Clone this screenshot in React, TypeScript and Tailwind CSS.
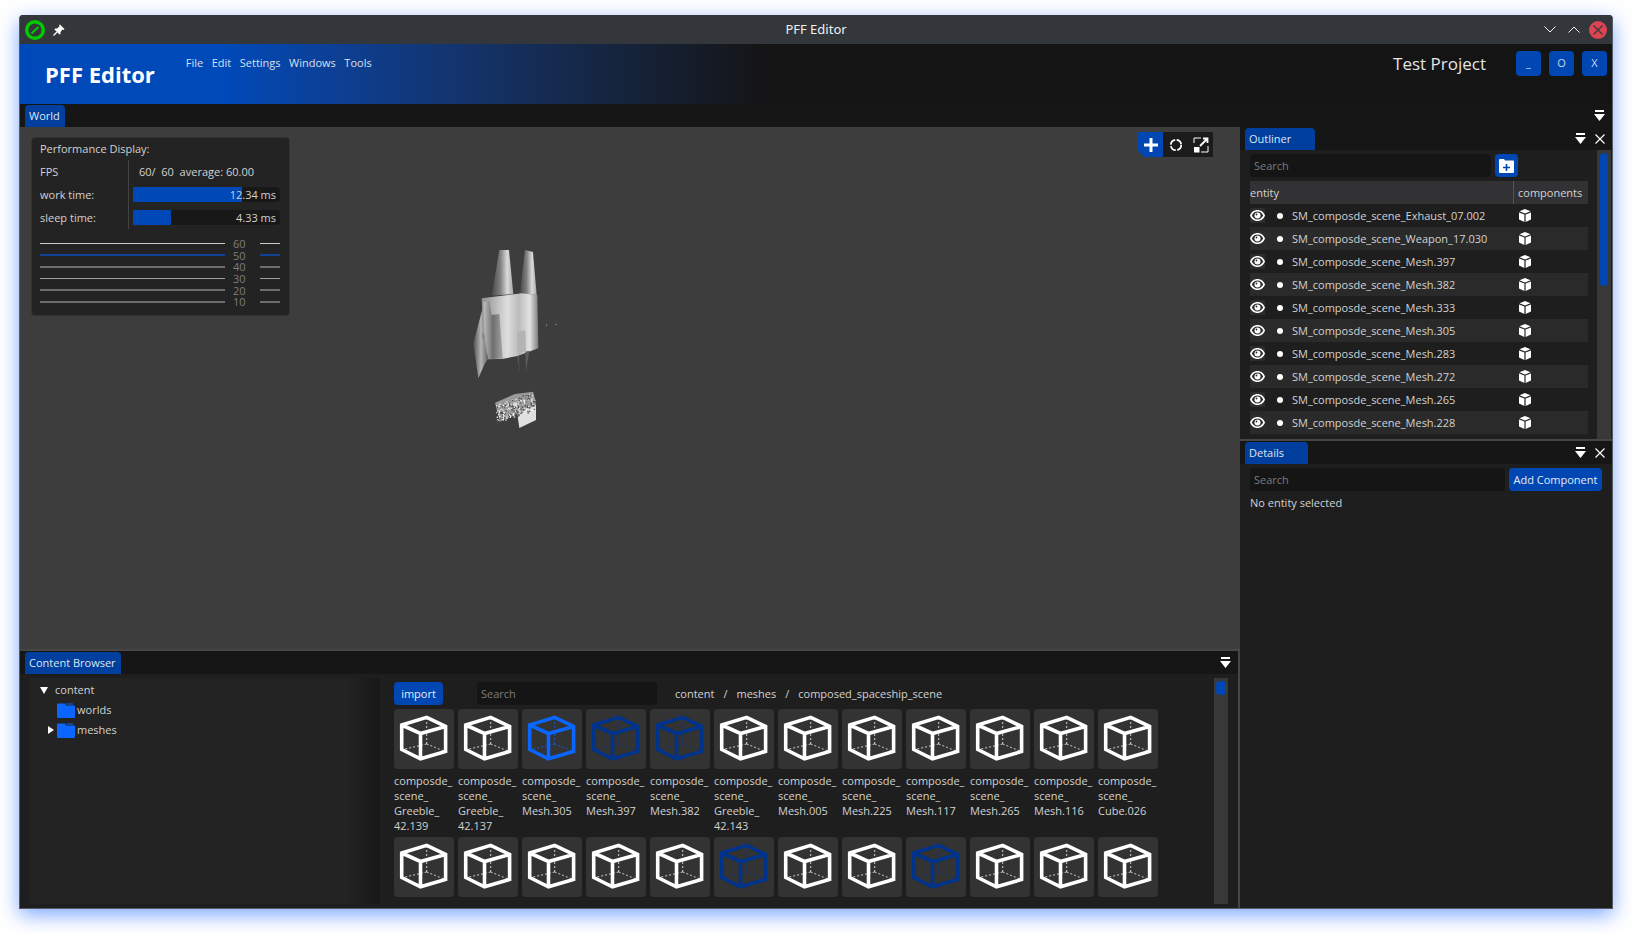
const ENTITIES = [
  "SM_composde_scene_Exhaust_07.002",
  "SM_composde_scene_Weapon_17.030",
  "SM_composde_scene_Mesh.397",
  "SM_composde_scene_Mesh.382",
  "SM_composde_scene_Mesh.333",
  "SM_composde_scene_Mesh.305",
  "SM_composde_scene_Mesh.283",
  "SM_composde_scene_Mesh.272",
  "SM_composde_scene_Mesh.265",
  "SM_composde_scene_Mesh.228",
];

type Tint = "white" | "bright" | "dark";

const TINTS: Record<Tint, string> = {
  white: "text-white",
  bright: "text-[#0a66ff]",
  dark: "text-[#00338c]",
};

const ROW_ONE: { lines: string[]; tint: Tint }[] = [
  { lines: ["composde_", "scene_", "Greeble_", "42.139"], tint: "white" },
  { lines: ["composde_", "scene_", "Greeble_", "42.137"], tint: "white" },
  { lines: ["composde_", "scene_", "Mesh.305"], tint: "bright" },
  { lines: ["composde_", "scene_", "Mesh.397"], tint: "dark" },
  { lines: ["composde_", "scene_", "Mesh.382"], tint: "dark" },
  { lines: ["composde_", "scene_", "Greeble_", "42.143"], tint: "white" },
  { lines: ["composde_", "scene_", "Mesh.005"], tint: "white" },
  { lines: ["composde_", "scene_", "Mesh.225"], tint: "white" },
  { lines: ["composde_", "scene_", "Mesh.117"], tint: "white" },
  { lines: ["composde_", "scene_", "Mesh.265"], tint: "white" },
  { lines: ["composde_", "scene_", "Mesh.116"], tint: "white" },
  { lines: ["composde_", "scene_", "Cube.026"], tint: "white" },
];

const ROW_TWO: Tint[] = ["white", "white", "white", "white", "white", "dark", "white", "white", "dark", "white", "white", "white"];

const GRAPH = [
  { label: "60", line: "bg-[#c8c8c8] h-px" },
  { label: "50", line: "bg-[#0f4296] h-[2px]" },
  { label: "40", line: "bg-[#6e6e6e] h-[2px]" },
  { label: "30", line: "bg-[#a0a0a0] h-px" },
  { label: "20", line: "bg-[#6e6e6e] h-[2px]" },
  { label: "10", line: "bg-[#6e6e6e] h-[2px]" },
];

const PopupIcon = () => (
  <svg width="11" height="12" viewBox="0 0 11 12" className="text-white">
    <rect x="1" y="0" width="9" height="2" fill="currentColor" />
    <path d="M0 4h11L5.5 11z" fill="currentColor" />
  </svg>
);

const CloseIcon = () => (
  <svg width="10" height="10" viewBox="0 0 10 10" className="text-white">
    <path d="M0.5 0.5l9 9M9.5 0.5l-9 9" stroke="currentColor" strokeWidth="1.2" />
  </svg>
);

const EyeIcon = () => (
  <svg width="15" height="11" viewBox="0 0 15 11">
    <path
      fillRule="evenodd"
      d="M7.5 0C11 0 13.8 2.2 15 5.5C13.8 8.8 11 11 7.5 11C4 11 1.2 8.8 0 5.5C1.2 2.2 4 0 7.5 0ZM7.5 1.6C5 1.6 2.9 3.1 1.8 5.5C2.9 7.9 5 9.4 7.5 9.4C10 9.4 12.1 7.9 13.2 5.5C12.1 3.1 10 1.6 7.5 1.6Z"
      fill="white"
    />
    <circle cx="7.5" cy="5.5" r="3" fill="white" />
    <circle cx="6.5" cy="4.5" r="0.9" fill="#2c2c2c" />
  </svg>
);

const CubeIcon = () => (
  <svg width="12" height="13" viewBox="0 0 12 13" className="text-white">
    <path d="M6 0L11.5 2.3L6 4.6L0.5 2.3Z" fill="currentColor" />
    <path d="M0 3.4L5.4 5.6V13L0 10.6Z" fill="currentColor" />
    <path d="M12 3.4L6.6 5.6V13L12 10.6Z" fill="currentColor" />
  </svg>
);

const Tab = ({ label, width }: { label: string; width: string }) => (
  <div className={`mt-px flex h-[22px] items-center rounded-t-sm bg-[#003f9e] pl-1 text-[#dfe6f2] ${width}`}>{label}</div>
);

const SearchBox = ({ width }: { width: string }) => (
  <div className={`flex h-[23px] items-center rounded-sm bg-[#151515] pl-1 pt-px text-[#7b7b7b] ${width}`}>Search</div>
);

const FolderIcon = () => (
  <svg width="18" height="15" viewBox="0 0 18 15" className="shrink-0 text-[#0a66ff]">
    <path d="M0 1.5a1 1 0 0 1 1-1h7l1 2h8a1 1 0 0 1 1 1V14a1 1 0 0 1-1 1H1a1 1 0 0 1-1-1z" fill="currentColor" />
    <path d="M9 0.5h7v1H9.5z" fill="currentColor" />
  </svg>
);

// wire cube used for every mesh thumbnail
const MeshTile = ({ tint }: { tint: Tint }) => (
  <div className="h-[60px] w-[60px] rounded-sm bg-[#333333]">
    <svg width="60" height="60" viewBox="0 0 60 60" className={TINTS[tint]} fill="none">
      <path d="M32.7 35V9" stroke="currentColor" strokeOpacity="0.75" strokeWidth="1" strokeDasharray="2 2" />
      <path d="M32.7 35L9 40.5M32.7 35L50 42" stroke="currentColor" strokeOpacity="0.75" strokeWidth="1" strokeDasharray="2 2" />
      <path
        d="M7.7 16L32.7 8.4L51.6 17.5V42.5L26.5 49.8L7.7 40.5ZM7.7 16L26.5 24.5L51.6 17.5M26.5 24.5V49.8"
        stroke="currentColor"
        strokeWidth="3.6"
        strokeLinejoin="miter"
      />
    </svg>
  </div>
);

// scattered pixels for the detailed mesh in the viewport
const hash = (n: number) => {
  const v = Math.sin(n * 12.9898) * 43758.5453;
  return v - Math.floor(v);
};

const SPECKS = Array.from({ length: 220 }, (_, i) => {
  const u = hash(i + 1);
  const v = hash(i + 500);
  return {
    x: 168 + u * 115,
    y: 522 - u * 38 + v * 56,
    dark: hash(i + 900) > 0.55,
  };
});

const ShipPreview = () => (
  <svg viewBox="0 0 420 630" className="absolute left-[420px] top-[103px] h-[210px] w-[140px]">
    <defs>
      <linearGradient id="hull" x1="0" x2="1" y1="0" y2="0">
        <stop offset="0" stopColor="#8c8c8c" />
        <stop offset="0.45" stopColor="#dedede" />
        <stop offset="0.65" stopColor="#bcbcbc" />
        <stop offset="0.85" stopColor="#e2e2e2" />
        <stop offset="1" stopColor="#7c7c7c" />
      </linearGradient>
      <linearGradient id="finL" x1="0" x2="1" y1="0" y2="0">
        <stop offset="0" stopColor="#484848" />
        <stop offset="0.4" stopColor="#808080" />
        <stop offset="0.72" stopColor="#dadada" />
        <stop offset="1" stopColor="#a8a8a8" />
      </linearGradient>
      <linearGradient id="wing" x1="0" x2="1" y1="0" y2="0">
        <stop offset="0" stopColor="#505050" />
        <stop offset="0.5" stopColor="#b4b4b4" />
        <stop offset="1" stopColor="#5a5a5a" />
      </linearGradient>
      <linearGradient id="panel" x1="0" x2="1" y1="0" y2="0">
        <stop offset="0" stopColor="#c0c0c0" />
        <stop offset="0.5" stopColor="#6e6e6e" />
        <stop offset="1" stopColor="#a4a4a4" />
      </linearGradient>
    </defs>
    <path d="M178 60L207 60L220 192L155 197Z" fill="url(#finL)" />
    <path d="M255 60L279 66L290 195L240 190Z" fill="url(#finL)" />
    <path d="M135 208L100 340L115 445L135 400L146 385L128 320Z" fill="url(#wing)" />
    <path d="M125 205L245 190L292 195L295 355L232 378L190 386L146 388L130 330Z" fill="url(#hull)" />
    <path d="M130 215L148 212L155 255L178 252L188 385L146 388L132 300Z" fill="url(#panel)" />
    <path d="M232 305L256 300L258 362L232 378Z" fill="#b4b4b4" />
    <path d="M232 378L240 432L236 378ZM256 365L258 425L268 362Z" fill="#5c5c5c" />
    <path d="M165 518L225 492L280 485L288 525L240 592L232 552L180 575Z" fill="#9a9a9a" />
    <path d="M232 552L288 525L288 570L238 594Z" fill="#e0e0e0" />
    {SPECKS.map((s, i) => (
      <rect key={i} x={s.x} y={s.y} width="4" height="4" fill={s.dark ? "#4c4c4c" : "#efefef"} />
    ))}
    <rect x="318" y="284" width="3" height="3" fill="#aaaaaa" />
    <rect x="346" y="282" width="3" height="3" fill="#aaaaaa" />
  </svg>
);

const PerfBar = ({ percent, value }: { percent: string; value: string }) => (
  <div className="flex h-[23px] items-center">
    <div className="relative h-[15px] w-[147px] rounded-sm bg-[#181818]">
      <div className={`h-full bg-[#0047b8] ${percent}`} />
      <span className="absolute right-1 top-0 leading-[15px]">{value}</span>
    </div>
  </div>
);

const PerfOverlay = () => (
  <div className="absolute left-[11px] top-[10px] h-[179px] w-[259px] rounded-sm border border-[#333333] bg-[#232323] pl-[8px] pr-[9px]">
    <div className="flex h-[22px] items-end pb-[3px]">Performance Display:</div>
    <div className="flex">
      <div className="w-[88px]">
        <div className="flex h-[23px] items-center pt-px">FPS</div>
        <div className="flex h-[23px] items-center pt-px">work time:</div>
        <div className="flex h-[23px] items-center pt-px">sleep time:</div>
      </div>
      <div className="h-[69px] w-px bg-[#444444]" />
      <div className="w-[151px] pl-1">
        <div className="flex h-[23px] items-center whitespace-pre pl-[6px] pt-px">60/  60  average: 60.00</div>
        <PerfBar percent="w-[74%]" value="12.34 ms" />
        <PerfBar percent="w-[26%]" value="4.33 ms" />
      </div>
    </div>
    <div className="relative mt-[9px]">
      {GRAPH.map((g) => (
        <div key={g.label} className="flex h-[11.6px] items-center">
          <div className={`flex-1 ${g.line}`} />
          <div className="w-[35px] pl-[8px] leading-none text-[#7d7d7d]">{g.label}</div>
          <div className={`w-[20px] ${g.line}`} />
        </div>
      ))}
    </div>
  </div>
);

const ViewportTools = () => (
  <div className="absolute right-[27px] top-[5px] flex h-[25px]">
    <div className="flex w-[25px] items-center justify-center bg-[#0047b3] [clip-path:polygon(0_0,100%_0,100%_100%,25%_100%,0_75%)]">
      <svg width="16" height="16" viewBox="0 0 16 16">
        <path d="M6.5 1h3v5.5H15v3H9.5V15h-3V9.5H1v-3h5.5z" fill="white" />
      </svg>
    </div>
    <div className="flex w-[25px] items-center justify-center bg-[#1b1b1b]">
      <svg width="14" height="14" viewBox="0 0 14 14" fill="none">
        <circle cx="7" cy="7" r="5.2" stroke="white" strokeWidth="1.8" strokeDasharray="6.6 1.6" />
      </svg>
    </div>
    <div className="flex w-[25px] items-center justify-center bg-[#1b1b1b]">
      <svg width="16" height="16" viewBox="0 0 16 16" fill="none">
        <path d="M1 6V1h7M15 9v6H8" stroke="white" strokeWidth="1" />
        <path d="M7 9L14 2M10 1.5h4.5V6" stroke="white" strokeWidth="1.8" />
        <rect x="1" y="10" width="5.5" height="5.5" fill="white" />
      </svg>
    </div>
  </div>
);

const Outliner = () => (
  <div className="flex h-[312px] flex-col overflow-hidden">
    <div className="flex h-[23px] shrink-0 items-start bg-[#161616] pl-[5px]">
      <Tab label="Outliner" width="w-[70px]" />
      <div className="ml-auto flex h-[23px] items-center gap-[9px] pr-[7px]">
        <PopupIcon />
        <CloseIcon />
      </div>
    </div>
    <div className="flex flex-1 bg-[#1e1e1e] pl-[10px]">
      <div className="w-[338px] pt-1">
        <div className="flex gap-1">
          <SearchBox width="w-[241px]" />
          <div className="flex h-[23px] w-[23px] items-center justify-center rounded-sm bg-[#0047b3]">
            <svg width="15" height="14" viewBox="0 0 15 14">
              <path d="M0 1a1 1 0 0 1 1-1h4l1 1.5h8a1 1 0 0 1 1 1V13a1 1 0 0 1-1 1H1a1 1 0 0 1-1-1z" fill="white" />
              <path d="M7.5 5v7M4 8.5h7" stroke="#0047b3" strokeWidth="1.6" />
            </svg>
          </div>
        </div>
        <div className="mt-1 flex h-[23px] items-center bg-[#323234] pt-px">
          <div className="-mt-px flex h-[23px] w-[264px] items-center border-r border-[#555555] pt-px">entity</div>
          <div className="pl-1">components</div>
        </div>
        {ENTITIES.map((name, i) => (
          <div key={name} className={`flex h-[23px] items-center ${i % 2 === 1 ? "bg-[#2a2a2a]" : "bg-[#1e1e1e]"}`}>
            <div className="flex h-[15px] w-[15px] items-center justify-center bg-[#2c2c2c]">
              <EyeIcon />
            </div>
            <div className="ml-[12px] h-[6px] w-[6px] rounded-full bg-white" />
            <div className="ml-[9px] w-[227px] whitespace-nowrap pt-px">{name}</div>
            <CubeIcon />
          </div>
        ))}
      </div>
      <div className="ml-[9px] w-[14px] bg-[#383838] px-[3px] pt-[3px]">
        <div className="h-[133px] rounded-sm bg-[#0047b3]" />
      </div>
    </div>
  </div>
);

const Details = () => (
  <div className="flex flex-1 flex-col">
    <div className="flex h-[23px] shrink-0 items-start bg-[#161616] pl-[5px]">
      <Tab label="Details" width="w-[63px]" />
      <div className="ml-auto flex h-[23px] items-center gap-[9px] pr-[7px]">
        <PopupIcon />
        <CloseIcon />
      </div>
    </div>
    <div className="flex-1 bg-[#1e1e1e] px-[10px] pt-1">
      <div className="flex gap-1">
        <SearchBox width="w-[255px]" />
        <div className="flex h-[23px] w-[93px] items-center justify-center rounded-sm bg-[#0047b3] pt-px text-[#e6ecf6]">Add Component</div>
      </div>
      <div className="mt-[5px] flex h-[15px] items-center">No entity selected</div>
    </div>
  </div>
);

const ContentBrowser = () => (
  <div className="flex h-[259px] shrink-0 flex-col border-r-2 border-t-2 border-[#464646]">
    <div className="flex h-[23px] shrink-0 items-start bg-[#161616] pl-[5px]">
      <Tab label="Content Browser" width="w-[96px]" />
      <div className="ml-auto flex h-[23px] items-center pr-[7px]">
        <PopupIcon />
      </div>
    </div>
    <div className="flex min-h-0 flex-1 bg-[#1e1e1e] px-[10px] py-1">
      <div className="w-[350px] shrink-0 bg-gradient-to-r from-[#232323] from-[90%] to-[#181818] pt-[2px]">
        <div className="flex h-[20px] items-center">
          <span className="ml-[10px] h-0 w-0 border-x-[4px] border-t-[7px] border-x-transparent border-t-white" />
          <span className="ml-[7px]">content</span>
        </div>
        <div className="flex h-[20px] items-center pl-[27px]">
          <FolderIcon />
          <span className="ml-[2px]">worlds</span>
        </div>
        <div className="flex h-[20px] items-center pl-[18px]">
          <span className="mr-[3px] h-0 w-0 border-y-[4px] border-l-[6px] border-y-transparent border-l-white" />
          <FolderIcon />
          <span className="ml-[2px]">meshes</span>
        </div>
      </div>
      <div className="min-w-0 flex-1 overflow-hidden pl-[14px] pt-1">
        <div className="flex h-[23px] items-center">
          <div className="flex h-[23px] w-[49px] items-center justify-center rounded-sm bg-[#0047b3] pt-px text-[#e6ecf6]">import</div>
          <SearchBox width="ml-[34px] w-[180px]" />
          <div className="ml-[18px] flex gap-[9px] pt-px">
            <span>content</span>
            <span>/</span>
            <span>meshes</span>
            <span>/</span>
            <span>composed_spaceship_scene</span>
          </div>
        </div>
        <div className="mt-1 grid grid-cols-[repeat(12,60px)] gap-x-1 gap-y-[3px]">
          {ROW_ONE.map((item, i) => (
            <div key={i} className="h-[125px]">
              <MeshTile tint={item.tint} />
              <div className="mt-[4px] leading-[15px]">
                {item.lines.map((line) => (
                  <div key={line} className="whitespace-nowrap">{line}</div>
                ))}
              </div>
            </div>
          ))}
          {ROW_TWO.map((tint, i) => (
            <MeshTile key={i} tint={tint} />
          ))}
        </div>
      </div>
      <div className="w-[14px] shrink-0 bg-[#383838] px-[2px] pt-[3px]">
        <div className="h-[14px] rounded-sm bg-[#0047b3]" />
      </div>
    </div>
  </div>
);

export default function App() {
  return (
    <div className="h-[933px] w-[1632px] overflow-hidden bg-white pb-[24px] pl-[19px] pr-[19px] pt-[15px] font-['Open_Sans',sans-serif] text-[11px] text-[#d2d2d2]">
      <div className="flex h-full flex-col overflow-hidden rounded-t-[4px] border border-t-0 border-[#565b61] bg-[#141414] shadow-[0_6px_20px_rgba(40,110,255,0.6)]">
        {/* window manager title bar */}
        <div className="flex h-[29px] shrink-0 items-center bg-[#33373b] pl-[5px] pr-[5px]">
          <div className="flex flex-1 items-center">
            <svg width="20" height="20" viewBox="0 0 20 20" fill="none">
              <circle cx="10" cy="10" r="8.3" stroke="#00cc00" strokeWidth="3.4" />
              <path d="M6.5 13.5L13.5 7" stroke="#00cc00" strokeWidth="2" />
            </svg>
            <svg width="12" height="12" viewBox="0 0 12 12" className="ml-[8px]">
              <path d="M7 0.5L11.5 5L10.5 6L9.5 5.5L7.5 8L7.5 10L6.5 10.5L1.5 5.5L2 4.5L4 4.5L6.5 2.5L6 1.5Z" fill="white" />
              <path d="M4 8L0.5 11.5" stroke="white" strokeWidth="1.2" />
            </svg>
          </div>
          <div className="pt-px font-['Noto_Sans',sans-serif] text-[13px] text-[#eff0f1]">PFF Editor</div>
          <div className="flex flex-1 items-center justify-end">
            <svg width="12" height="7" viewBox="0 0 12 7" fill="none" className="mr-[12px]">
              <path d="M0.5 0.5L6 6L11.5 0.5" stroke="#eff0f1" />
            </svg>
            <svg width="12" height="7" viewBox="0 0 12 7" fill="none" className="mr-[9px]">
              <path d="M0.5 6.5L6 1L11.5 6.5" stroke="#eff0f1" />
            </svg>
            <div className="flex h-[18px] w-[18px] items-center justify-center rounded-full bg-[#da4453]">
              <svg width="10" height="10" viewBox="0 0 10 10" fill="none">
                <path d="M0.5 0.5L9.5 9.5M9.5 0.5L0.5 9.5" stroke="#33373b" strokeWidth="1.1" />
              </svg>
            </div>
          </div>
        </div>

        {/* app header */}
        <div className="flex h-[60px] shrink-0 bg-gradient-to-r from-[#0049b8] from-[13%] to-[#141414] to-[47%]">
          <div className="ml-[25px] mt-[15px] text-[22px] font-bold leading-[30px] text-white">PFF Editor</div>
          <div className="ml-[31px] mt-[11px] flex h-[15px] gap-[8.5px] text-[#d8e0ee]">
            <span>File</span>
            <span>Edit</span>
            <span>Settings</span>
            <span>Windows</span>
            <span>Tools</span>
          </div>
          <div className="ml-auto mr-[5px] mt-[7px] flex h-[25px] items-center gap-2">
            <div className="mr-[22px] text-[17px] text-[#e4e4e4]">Test Project</div>
            <div className="flex h-[25px] w-[25px] items-center justify-center rounded-sm bg-[#0047b3] text-[#c8d6ee]">_</div>
            <div className="flex h-[25px] w-[25px] items-center justify-center rounded-sm bg-[#0047b3] text-[#c8d6ee]">O</div>
            <div className="flex h-[25px] w-[25px] items-center justify-center rounded-sm bg-[#0047b3] text-[#c8d6ee]">X</div>
          </div>
        </div>

        {/* world tab strip */}
        <div className="flex h-[23px] shrink-0 items-start bg-[#161616] pl-[5px]">
          <Tab label="World" width="w-[40px]" />
          <div className="ml-auto flex h-[23px] items-center pr-[7px]">
            <PopupIcon />
          </div>
        </div>

        <div className="flex min-h-0 flex-1">
          <div className="flex w-[1220px] shrink-0 flex-col">
            <div className="relative min-h-0 flex-1 bg-[#3d3d3d]">
              <PerfOverlay />
              <ShipPreview />
              <ViewportTools />
            </div>
            <ContentBrowser />
          </div>
          <div className="flex min-w-0 flex-1 flex-col">
            <Outliner />
            <div className="h-[2px] shrink-0 bg-[#464646]" />
            <Details />
          </div>
        </div>
      </div>
    </div>
  );
}
